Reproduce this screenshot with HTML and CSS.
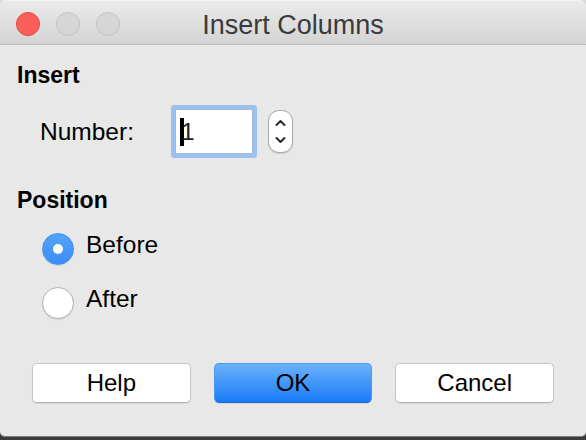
FILE: index.html
```html
<!DOCTYPE html>
<html>
<head>
<meta charset="utf-8">
<title>Insert Columns</title>
<link rel="stylesheet" href="styles.css">
</head>
<body>
<div class="window">
  <div class="titlebar">
    <div class="lights">
      <span class="light close"></span>
      <span class="light"></span>
      <span class="light"></span>
    </div>
    <div class="title">Insert Columns</div>
    <div></div>
  </div>
  <div class="content">
    <div class="heading">Insert</div>
    <div class="number-row">
      <span class="label">Number:</span>
      <div class="field"><span class="caret"></span><span class="value">1</span></div>
      <div class="stepper">
        <svg width="25" height="43" viewBox="0 0 25 43">
          <polyline points="8.5,15 12.5,11 16.5,15" fill="none" stroke="#2a2a2a" stroke-width="2" stroke-linecap="round" stroke-linejoin="round"/>
          <polyline points="8.5,28 12.5,32 16.5,28" fill="none" stroke="#2a2a2a" stroke-width="2" stroke-linecap="round" stroke-linejoin="round"/>
        </svg>
      </div>
    </div>
    <div class="heading heading-pos">Position</div>
    <div class="radio-row first">
      <span class="radio checked"></span>
      <span class="radio-label">Before</span>
    </div>
    <div class="radio-row">
      <span class="radio"></span>
      <span class="radio-label">After</span>
    </div>
  </div>
  <div class="buttons">
    <button class="btn">Help</button>
    <button class="btn btn-default">OK</button>
    <button class="btn">Cancel</button>
  </div>
</div>
</body>
</html>
```

FILE: styles.css
```css
html, body {
  margin: 0;
  padding: 0;
}
body {
  width: 586px;
  height: 440px;
  overflow: hidden;
  background: linear-gradient(#dadada 0, #dadada 420px, #3c3c3c 420px);
  font-family: "Liberation Sans", Arial, sans-serif;
  color: #000;
}
.window {
  width: 586px;
  box-sizing: border-box;
  background: #e8e8e8;
  border-radius: 6px 6px 5px 5px;
  border-bottom: 1px solid #7c7c7c;
  padding-bottom: 33px;
  overflow: hidden;
}
.titlebar {
  height: 45px;
  box-sizing: border-box;
  display: grid;
  grid-template-columns: 1fr auto 1fr;
  align-items: start;
  background: linear-gradient(#ebeaeb, #d4d4d4);
  border-top: 1px solid #f4f4f4;
  border-bottom: 1px solid #bfbfbf;
}
.lights {
  display: flex;
  gap: 16px;
  padding: 11px 0 0 16px;
}
.light {
  width: 24px;
  height: 24px;
  box-sizing: border-box;
  border-radius: 50%;
  background: #d6d6d6;
  border: 1px solid #c3c3c3;
}
.light.close {
  background: #fc5f57;
  border-color: #e2463f;
}
.title {
  font-size: 27px;
  line-height: 48px;
  color: #3a3a3a;
  white-space: nowrap;
}
.content {
  padding: 16px 0 0 17px;
}
.heading {
  font-weight: bold;
  font-size: 23px;
  line-height: 28px;
}
.heading-pos {
  margin-top: 27px;
}
.number-row {
  margin-top: 15px;
  height: 55px;
  display: flex;
  align-items: center;
  padding-left: 23px;
}
.label {
  font-size: 24.5px;
  line-height: 28px;
  width: 135px;
}
.field {
  width: 78px;
  height: 45px;
  box-sizing: border-box;
  background: #fff;
  border: 1px solid #a8b8cc;
  border-radius: 1px;
  box-shadow: 0 0 0 4px #9bc1ee;
  display: flex;
  align-items: center;
  padding-left: 4px;
}
.caret {
  display: inline-block;
  width: 4px;
  height: 28px;
  background: #000;
  margin-right: -3px;
}
.value {
  font-size: 24.5px;
  line-height: 28px;
  color: #222;
}
.stepper {
  margin-left: 15px;
  width: 25px;
  height: 43px;
  box-sizing: border-box;
  background: #fff;
  border: 1px solid #a9a9a9;
  border-radius: 11px;
  box-shadow: 0 1px 1px rgba(0,0,0,0.12);
  display: flex;
  align-items: center;
  justify-content: center;
}
.stepper svg {
  display: block;
  margin: -1px;
}
.radio-row {
  display: flex;
  align-items: flex-start;
  padding-left: 25px;
  margin-top: 20px;
}
.radio-row.first {
  margin-top: 17px;
}
.radio {
  width: 32px;
  height: 32px;
  box-sizing: border-box;
  border-radius: 50%;
  margin-top: 2px;
  background: #fff;
  border: 1px solid #b3b3b3;
  box-shadow: 0 1px 1px rgba(0,0,0,0.1);
  display: flex;
  align-items: center;
  justify-content: center;
}
.radio.checked {
  background: linear-gradient(#54a3f9, #3a8ff7);
  border-color: #3b8ff5;
}
.radio.checked::after {
  content: "";
  width: 10px;
  height: 10px;
  border-radius: 50%;
  background: #fff;
}
.radio-label {
  font-size: 24.5px;
  line-height: 28px;
  margin-left: 12px;
}
.buttons {
  margin-top: 44px;
  padding: 0 32px;
  display: grid;
  grid-template-columns: 1fr 1fr 1fr;
  gap: 23px;
}
.btn {
  height: 40px;
  margin: 0;
  padding: 0;
  font-family: "Liberation Sans", Arial, sans-serif;
  font-size: 24px;
  color: #000;
  background: #fff;
  border: 1px solid #c6c6c6;
  border-bottom-color: #b4b4b4;
  border-radius: 5px;
  box-shadow: 0 1px 1px rgba(0,0,0,0.08);
}
.btn-default {
  background: linear-gradient(#6ab2fa, #1a7bf8);
  border-color: #4e98f4;
  border-bottom-color: #1669e0;
}
```
